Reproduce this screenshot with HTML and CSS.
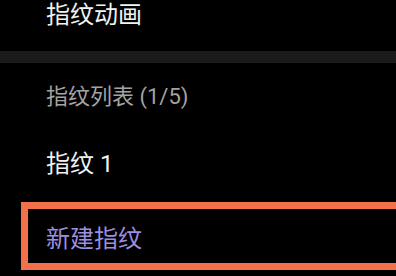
FILE: index.html
```html
<!DOCTYPE html>
<html lang="zh-CN">
<head>
<meta charset="UTF-8" />
<meta name="viewport" content="width=device-width, initial-scale=1.0" />
<title>指纹</title>
<link rel="stylesheet" href="styles.css">
</head>
<body>
<div class="screen">
  <div class="item item-top">指纹动画</div>
  <div class="divider"></div>
  <div class="section-title">指纹列表 (1/5)</div>
  <div class="item item-finger">指纹 1</div>
  <div class="item item-add">新建指纹</div>
</div>
</body>
</html>
```

FILE: styles.css
```css
body {
  margin: 0;
  background: #000;
  font-family: Roboto, "Noto Sans CJK SC", sans-serif;
  overflow: hidden;
}
.screen {
  display: flex;
  flex-direction: column;
  width: 396px;
  height: 276px;
}
.item {
  color: #f2f2f2;
  font-size: 24px;
  line-height: 30px;
  padding-left: 46px;
}
.divider {
  margin-top: 21px;
  height: 12px;
  background: #1b1b1b;
}
.section-title {
  color: #a3a3a3;
  font-size: 22px;
  line-height: 30px;
  padding: 19px 0 0 46px;
}
.item-finger {
  margin-top: 37px;
}
.item-add {
  margin: 23px 0 0 21px;
  border: 7px solid #f3714a;
  border-right: 0;
  padding: 15px 0 9px 18px;
  color: #9d8ee0;
}
```
